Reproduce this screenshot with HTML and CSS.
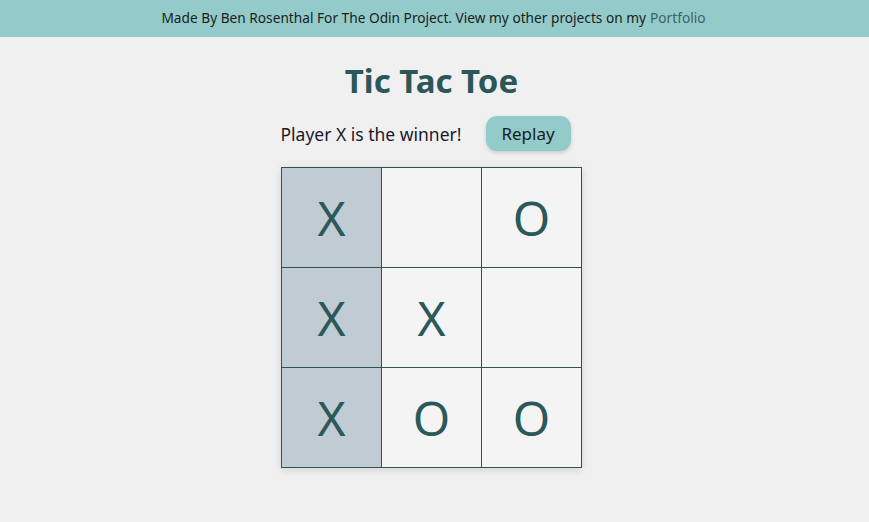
FILE: index.html
```html
<!DOCTYPE html>
<html>
<head>
<meta charset="utf-8">
<link rel="stylesheet" href="styles.css">
</head>
<body>
<header class="topbar">Made By Ben Rosenthal For The Odin Project. View my other projects on my <a class="link" href="#">Portfolio</a></header>
<main class="main">
  <h1 class="title">Tic Tac Toe</h1>
  <div class="status-row">
    <span class="status">Player X is the winner!</span>
    <button class="replay">Replay</button>
  </div>
  <div class="board">
    <div class="cell win">X</div>
    <div class="cell"></div>
    <div class="cell">O</div>
    <div class="cell win">X</div>
    <div class="cell">X</div>
    <div class="cell"></div>
    <div class="cell win">X</div>
    <div class="cell">O</div>
    <div class="cell">O</div>
  </div>
</main>
</body>
</html>
```
FILE: styles.css
```css
* { box-sizing: border-box; }
html, body { margin: 0; padding: 0; }
body {
  background: #f0f0f0;
  font-family: "Noto Sans", "Open Sans", sans-serif;
  width: 869px;
  height: 522px;
  overflow: hidden;
}
.topbar {
  height: 37px;
  background: #93cbcb;
  color: #1c1c1c;
  font-size: 13.7px;
  display: flex;
  align-items: center;
  justify-content: center;
  gap: 4px;
  padding-right: 2px;
  padding-bottom: 3px;
}
.link { color: #3f6262; text-decoration: none; }
.main {
  display: flex;
  flex-direction: column;
  align-items: center;
  padding-right: 6px;
}
.title {
  margin: 24px 0 0 0;
  font-size: 33px;
  line-height: 40px;
  font-weight: 700;
  color: #2b5757;
}
.status-row {
  display: flex;
  align-items: center;
  gap: 24px;
  margin-top: 15px;
  margin-right: 12px;
}
.status { font-size: 17.5px; color: #1a1a2a; }
.replay {
  font-family: inherit;
  font-size: 17px;
  color: #1a1a1a;
  background: #93cbcb;
  border: none;
  border-radius: 11px;
  width: 85px;
  height: 35px;
  box-shadow: 0 2px 4px rgba(0,0,0,0.15);
}
.board {
  margin-top: 16px;
  display: grid;
  grid-template-columns: repeat(3, 99px);
  grid-template-rows: repeat(3, 99px);
  gap: 1px;
  padding: 1px;
  background: #2f5353;
  box-shadow: 0 2px 8px rgba(0,0,0,0.12);
}
.cell {
  background: #f4f4f4;
  display: flex;
  align-items: center;
  justify-content: center;
  font-size: 48px;
  color: #2b5959;
}
.cell.win { background: #c1cbd4; }
```
